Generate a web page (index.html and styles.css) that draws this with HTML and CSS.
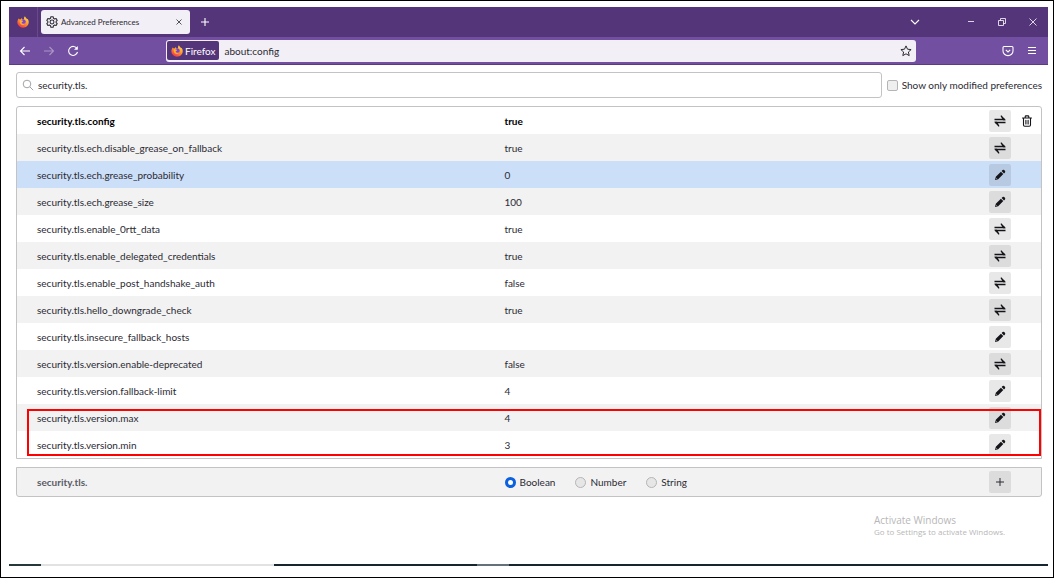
FILE: index.html
```html
<!DOCTYPE html>
<html lang="en">
<head>
<meta charset="utf-8">
<title>Advanced Preferences</title>
<link rel="stylesheet" href="styles.css">
</head>
<body>
<svg class="defs" aria-hidden="true">
  <defs>
    <linearGradient id="flame" x1="0.8" y1="0" x2="0.2" y2="1">
      <stop offset="0" stop-color="#ffe14a"/>
      <stop offset="0.45" stop-color="#ff9a2b"/>
      <stop offset="1" stop-color="#f0284f"/>
    </linearGradient>
    <symbol id="firefox" viewBox="0 0 16 16">
      <path fill="url(#flame)" d="M2.4 3.2 3.6 4.6 5 4.2 6.6 2.6 7 4.6 9.6 4.6C9 3 9.4 1.4 10.6.4c.4 1.8 2 2.4 3 4l.4-.6c1.400 1.600 1.800 3.400 1.600 5.200C15.200 12.800 12 15.600 8 15.600S.7 12.600.5 8.800C.4 6.600 1.200 4.600 2.400 3.200z"/>
      <circle cx="8.400" cy="7.800" r="3.300" fill="#7a45d8"/>
      <path fill="#ffb02e" d="M3.800 6.200c1.600-.8 3.200-.4 4.400.6L6.800 8.200c-.8.2-1 1-.4 1.600 1 1 2.800.6 4-.2-.6 2-2.400 2.800-4 2.200C4.400 11 3.400 8.600 3.800 6.200z"/>
    </symbol>
    <symbol id="swap" viewBox="0 0 12 12">
      <path d="M.5 4.500h10.500M11.500 7.500H1" stroke="currentColor" stroke-width="1.600" fill="none"/>
      <path d="M7.300.3 12 5.200H9L6.500 1zM4.700 11.700 0 6.800h3L5.500 11z" fill="currentColor"/>
    </symbol>
    <symbol id="pencil" viewBox="0 0 12 12">
      <path fill="currentColor" d="M1 11 1.800 7.800 6.900 2.700 9.300 5.100 4.200 10.200zM7.600 2 8.600 1q.8-.6 1.600.1l.7.700q.7.800.1 1.600L10 4.400z"/>
      <path d="M1.900 8.800 3.200 10.100" stroke="#ddd" stroke-width=".5"/>
    </symbol>
    <symbol id="trash" viewBox="0 0 12 12">
      <path d="M1.500 3h9M4.200 2.800V1.700q0-.8.800-.8h2q.8 0 .8.800v1.100M2.500 3v7q0 1.200 1.200 1.200h4.600q1.200 0 1.200-1.200V3M4.900 5.300v3.600M7.100 5.300v3.600" fill="none" stroke="currentColor" stroke-width="1.100" stroke-linecap="round"/>
    </symbol>
  </defs>
</svg>

<div class="frame">
  <div class="browser">
    <header class="tabbar">
      <div class="home"><svg class="icon-12"><use href="#firefox"/></svg></div>
      <div class="tab">
        <svg class="icon-12" viewBox="0 0 16 16" fill="none" stroke="#2b2a33" stroke-width="1.400" stroke-linejoin="round"><path d="M6.500 1h3l.5 2 1.500.9 2-.6L15 5.900 13.500 7.300v1.400L15 10.100l-1.500 2.600-2-.6L10 13l-.5 2h-3L6 13l-1.500-.9-2 .6L1 10.100l1.500-1.400V7.300L1 5.900l1.500-2.600 2 .6L6 3z"/><circle cx="8" cy="8" r="2.600"/></svg>
        <span class="tab-title">Advanced Preferences</span>
        <button class="tab-close" aria-label="Close tab"><svg viewBox="0 0 6 6"><path d="M.5.5l5 5M5.500.5l-5 5"/></svg></button>
      </div>
      <button class="chrome-button" aria-label="New tab"><svg viewBox="0 0 10 10" class="icon-10"><path d="M5 1v8M1 5h8"/></svg></button>
      <div class="window-controls">
        <button class="chrome-button tab-list" aria-label="List all tabs"><svg viewBox="0 0 10 10" class="icon-10"><path d="M1 3l4 4 4-4"/></svg></button>
        <button class="chrome-button" aria-label="Minimize"><svg viewBox="0 0 10 10" class="icon-10 thin"><path d="M2 4.500h6"/></svg></button>
        <button class="chrome-button" aria-label="Restore"><svg viewBox="0 0 10 10" class="icon-10 thin"><path d="M1.500 3.500h5v5h-5zM3.500 3.500V1.500h5v5H6.500"/></svg></button>
        <button class="chrome-button" aria-label="Close window"><svg viewBox="0 0 10 10" class="icon-10 thin"><path d="M1.500 1.500l7 7M8.500 1.500l-7 7"/></svg></button>
      </div>
    </header>

    <nav class="toolbar">
      <div class="nav-buttons">
        <button class="chrome-button" aria-label="Back"><svg viewBox="0 0 12 12" class="icon-12"><path d="M11 6H1.500M5.500 2l-4 4 4 4"/></svg></button>
        <button class="chrome-button" aria-label="Forward" disabled><svg viewBox="0 0 12 12" class="icon-12"><path d="M1 6h9.500M6.500 2l4 4-4 4"/></svg></button>
        <button class="chrome-button" aria-label="Reload"><svg viewBox="0 0 12 12" class="icon-12"><path d="M10 3.600A4.500 4.500 0 1 0 10.500 7"/><path d="M10.800 1v3.800H7z" fill="#fff" stroke="none"/></svg></button>
      </div>
      <div class="urlbar">
        <span class="identity"><svg class="icon-12"><use href="#firefox"/></svg>Firefox</span>
        <input class="url" type="text" value="about:config" aria-label="Address">
        <button class="bookmark" aria-label="Bookmark this page"><svg viewBox="0 0 12 12" class="icon-12"><path d="M6 .9l1.500 3.300 3.600.4-2.700 2.400.8 3.600L6 8.800l-3.200 1.800.8-3.600L.9 4.600l3.600-.4z"/></svg></button>
      </div>
      <div class="toolbar-end">
        <button class="chrome-button" aria-label="Save to Pocket"><svg viewBox="0 0 12 12" class="icon-12"><path d="M2 1.500h8q1 0 1 1V6A5 4.600 0 0 1 1 6V2.500q0-1 1-1zM3.800 4.800 6 6.900l2.200-2.100"/></svg></button>
        <button class="chrome-button" aria-label="Open menu"><svg viewBox="0 0 10 10" class="icon-10"><path d="M1 1.500h8M1 4.500h8M1 7.500h8"/></svg></button>
      </div>
    </nav>

    <main class="page">
      <div class="search-row">
        <div class="search">
          <svg viewBox="0 0 12 12" class="icon-12"><circle cx="5" cy="5" r="3.800"/><path d="M8 8l3.200 3.200"/></svg>
          <input type="text" value="security.tls." aria-label="Search preference name">
        </div>
        <label class="only-modified"><input type="checkbox">Show only modified preferences</label>
      </div>

      <div class="prefs">
        <table>
          <colgroup><col class="col-name"><col class="col-value"><col class="col-edit"><col class="col-reset"></colgroup>
          <tbody>
            <tr class="modified"><th scope="row">security.tls.config</th><td>true</td><td><button class="action" aria-label="Toggle"><svg class="icon-12"><use href="#swap"/></svg></button></td><td><button class="action reset" aria-label="Delete"><svg class="icon-12"><use href="#trash"/></svg></button></td></tr>
            <tr><th scope="row">security.tls.ech.disable_grease_on_fallback</th><td>true</td><td><button class="action" aria-label="Toggle"><svg class="icon-12"><use href="#swap"/></svg></button></td><td></td></tr>
            <tr class="selected"><th scope="row">security.tls.ech.grease_probability</th><td>0</td><td><button class="action" aria-label="Edit"><svg class="icon-12"><use href="#pencil"/></svg></button></td><td></td></tr>
            <tr><th scope="row">security.tls.ech.grease_size</th><td>100</td><td><button class="action" aria-label="Edit"><svg class="icon-12"><use href="#pencil"/></svg></button></td><td></td></tr>
            <tr><th scope="row">security.tls.enable_0rtt_data</th><td>true</td><td><button class="action" aria-label="Toggle"><svg class="icon-12"><use href="#swap"/></svg></button></td><td></td></tr>
            <tr><th scope="row">security.tls.enable_delegated_credentials</th><td>true</td><td><button class="action" aria-label="Toggle"><svg class="icon-12"><use href="#swap"/></svg></button></td><td></td></tr>
            <tr><th scope="row">security.tls.enable_post_handshake_auth</th><td>false</td><td><button class="action" aria-label="Toggle"><svg class="icon-12"><use href="#swap"/></svg></button></td><td></td></tr>
            <tr><th scope="row">security.tls.hello_downgrade_check</th><td>true</td><td><button class="action" aria-label="Toggle"><svg class="icon-12"><use href="#swap"/></svg></button></td><td></td></tr>
            <tr><th scope="row">security.tls.insecure_fallback_hosts</th><td></td><td><button class="action" aria-label="Edit"><svg class="icon-12"><use href="#pencil"/></svg></button></td><td></td></tr>
            <tr><th scope="row">security.tls.version.enable-deprecated</th><td>false</td><td><button class="action" aria-label="Toggle"><svg class="icon-12"><use href="#swap"/></svg></button></td><td></td></tr>
            <tr><th scope="row">security.tls.version.fallback-limit</th><td>4</td><td><button class="action" aria-label="Edit"><svg class="icon-12"><use href="#pencil"/></svg></button></td><td></td></tr>
            <tr><th scope="row">security.tls.version.max</th><td>4</td><td><button class="action" aria-label="Edit"><svg class="icon-12"><use href="#pencil"/></svg></button></td><td></td></tr>
            <tr><th scope="row">security.tls.version.min</th><td>3</td><td><button class="action" aria-label="Edit"><svg class="icon-12"><use href="#pencil"/></svg></button></td><td></td></tr>
          </tbody>
        </table>
        <div class="highlight"></div>
      </div>

      <form class="add-pref">
        <span class="add-name">security.tls.</span>
        <div class="types">
          <label><input type="radio" name="type" checked>Boolean</label>
          <label><input type="radio" name="type">Number</label>
          <label><input type="radio" name="type">String</label>
        </div>
        <button class="action" type="button" aria-label="Add"><svg viewBox="0 0 12 12" class="icon-12 plus"><path d="M6 2v8M2 6h8"/></svg></button>
      </form>

      <aside class="activation">
        <p class="activation-title">Activate Windows</p>
        <p class="activation-text">Go to Settings to activate Windows.</p>
      </aside>
    </main>
    <footer class="taskbar"></footer>
  </div>
</div>
</body>
</html>
```

FILE: styles.css
```css
* {
  box-sizing: border-box;
}

body {
  margin: 0;
  background: #fff;
  color: #2b2a33;
  font: 10px/14px Lato, "Open Sans", sans-serif;
}

button,
input {
  margin: 0;
  padding: 0;
  border: 0;
  background: none;
  color: inherit;
  font: inherit;
}

p {
  margin: 0;
}

svg {
  display: block;
  flex: none;
}

.defs {
  position: absolute;
  width: 0;
  height: 0;
}

.icon-12 {
  width: 12px;
  height: 12px;
}

.icon-10 {
  width: 10px;
  height: 10px;
}

.frame {
  display: flex;
  min-height: 100vh;
  padding: 6px 5px 11px 8px;
  border: 1px solid #000;
}

.browser {
  display: flex;
  flex: 1;
  flex-direction: column;
  min-width: 0;
}

/* Tab strip */
.tabbar {
  display: flex;
  align-items: center;
  height: 30px;
  background: #54357a;
}

.home {
  display: flex;
  align-items: center;
  justify-content: center;
  width: 29px;
  height: 30px;
  border-right: 1px solid #67498c;
}

.tab {
  display: flex;
  align-items: center;
  gap: 3px;
  width: 149px;
  height: 24px;
  margin: 0 3px;
  padding: 0 6px 0 5px;
  border-radius: 3px;
  background: #f2eff6;
  font-size: 8px;
}

.tab-title {
  flex: 1;
  white-space: nowrap;
}

.tab-close {
  padding: 2px;
}

.tab-close svg {
  width: 6px;
  height: 6px;
  fill: none;
  stroke: #2b2a33;
  stroke-width: 0.8;
}

.chrome-button {
  display: flex;
  align-items: center;
  justify-content: center;
  width: 24px;
  height: 24px;
}

.chrome-button svg {
  fill: none;
  stroke: #fff;
  stroke-width: 1.1;
}

.chrome-button .thin {
  stroke-width: 0.8;
}

.chrome-button:disabled {
  opacity: 0.4;
}

.window-controls {
  display: flex;
  gap: 7px;
  margin-left: auto;
  padding-right: 3px;
}

.tab-list {
  margin-right: 25px;
}

/* Navigation toolbar */
.toolbar {
  display: flex;
  align-items: center;
  height: 28px;
  border-bottom: 1px solid #5b3b85;
  background: #724fa0;
}

.nav-buttons {
  display: flex;
  width: 157px;
  padding-left: 4px;
}

.urlbar {
  display: flex;
  flex: 1;
  align-items: center;
  height: 22px;
  padding: 1px;
  border-radius: 3px;
  background: #f2eff6;
}

.identity {
  display: flex;
  align-items: center;
  gap: 2px;
  height: 19px;
  padding: 0 4px;
  border-radius: 2px;
  background: #54357a;
  color: #fff;
}

.url {
  flex: 1;
  min-width: 0;
  padding-left: 5px;
}

.bookmark {
  padding: 3px;
}

.bookmark svg {
  fill: none;
  stroke: #2b2a33;
  stroke-linejoin: round;
}

.toolbar-end {
  display: flex;
  justify-content: flex-end;
  width: 132px;
  padding-right: 4px;
}

/* Preferences page */
.page {
  flex: 1;
  padding: 7px 6px 0 7px;
}

.search-row {
  display: flex;
  align-items: center;
  gap: 5px;
  margin-bottom: 8px;
}

.search {
  display: flex;
  flex: 1;
  align-items: center;
  gap: 4px;
  height: 26px;
  padding: 0 5px;
  border: 1px solid #c3c3c6;
  border-radius: 3px;
}

.search svg {
  fill: none;
  stroke: #a2a2a8;
}

.search input {
  flex: 1;
  min-width: 0;
}

.only-modified {
  display: flex;
  align-items: center;
  gap: 4px;
  white-space: nowrap;
}

.only-modified input {
  width: 11px;
  height: 11px;
  border: 1px solid #b5b5b8;
  border-radius: 2px;
  appearance: none;
  background: #efefef;
}

.prefs {
  position: relative;
  border: 1px solid #c3c3c6;
  border-radius: 3px 3px 0 0;
}

table {
  width: 100%;
  border-collapse: collapse;
  table-layout: fixed;
}

.col-name {
  width: 47.6%;
}

.col-edit {
  width: 27px;
}

.col-reset {
  width: 25px;
}

tr {
  height: 27px;
}

tr:nth-child(even) {
  background: #f2f2f2;
}

tr.selected {
  background: #cbdff8;
}

th,
td {
  padding: 0;
  font-weight: 400;
  text-align: left;
}

th {
  padding-left: 20px;
}

.modified th,
.modified td {
  color: #000;
  font-weight: 700;
}

.action {
  display: flex;
  align-items: center;
  justify-content: center;
  width: 22px;
  height: 22px;
  border-radius: 2px;
  background: rgb(0 0 0 / 9%);
  color: #15141a;
}

.action.reset {
  background: none;
}

/* Marks the version limits */
.highlight {
  position: absolute;
  right: 0;
  bottom: 2px;
  left: 10px;
  height: 47px;
  border: 2px solid #f00;
}

.add-pref {
  display: flex;
  align-items: center;
  height: 30px;
  margin-top: 8px;
  padding: 0 30px 0 20px;
  border: 1px solid #c3c3c6;
  border-radius: 0 0 3px 3px;
  background: #f2f2f2;
}

.add-name {
  width: 48%;
  color: #5b5b66;
  font-weight: 700;
}

.types {
  display: flex;
  flex: 1;
  gap: 20px;
}

.types label {
  display: flex;
  align-items: center;
  gap: 4px;
}

.types input {
  width: 11px;
  height: 11px;
  border: 1px solid #b5b5b8;
  border-radius: 50%;
  appearance: none;
  background: #e6e6e6;
}

.types input:checked {
  border: 3px solid #0a60df;
  background: #fff;
}

.plus {
  fill: none;
  stroke: #2b2a33;
}

.activation {
  width: 168px;
  margin-top: 16px;
  margin-left: auto;
  color: #b7b7b7;
  font-family: "Open Sans", sans-serif;
}

.activation-title {
  font-size: 10px;
}

.activation-text {
  font-size: 8px;
  line-height: 10px;
}

.taskbar {
  height: 2px;
  background: linear-gradient(90deg, #26383b 32px, #e1e3e3 32px 265px, #17252f 265px 468px, #65717a 468px 500px, #17252f 500px);
}
```
